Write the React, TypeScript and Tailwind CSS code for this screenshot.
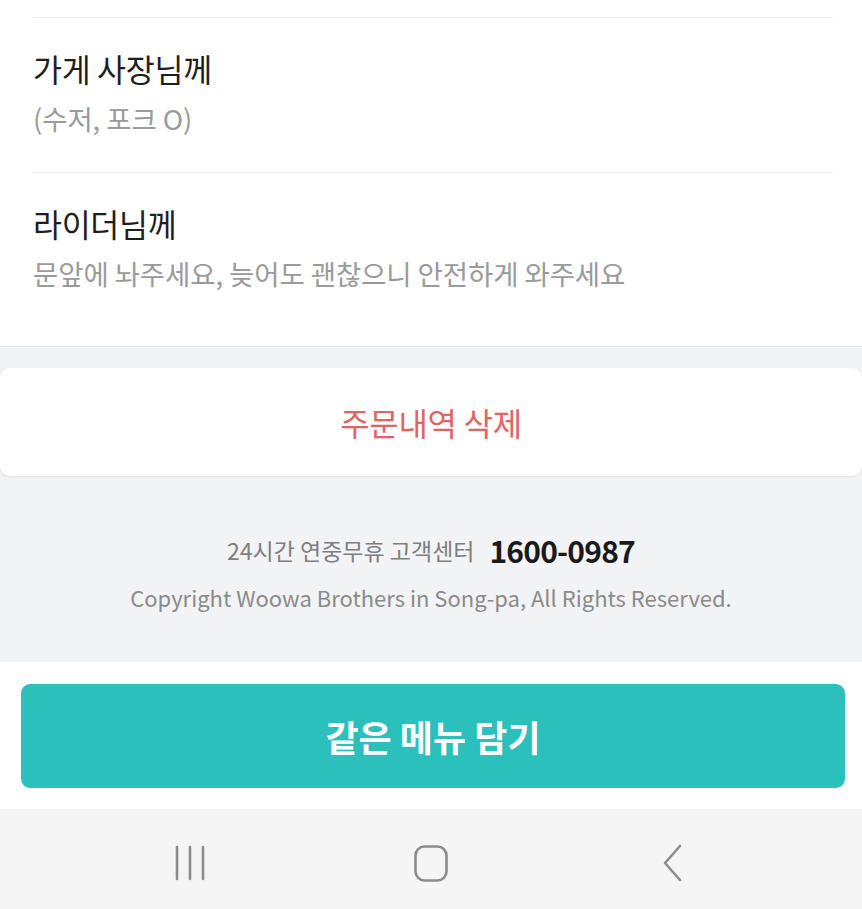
import React from 'react';

const KR = { fontFamily: '"Noto Sans CJK KR", "Noto Sans", sans-serif' };

function RequestItem({ title, note }: { title: string; note: string }) {
  return (
    <div className="border-t border-[#eeeff1] pt-[30px] pb-[36px]">
      <p className="text-[31.5px] leading-[40px] text-[#1e1e1e] tracking-[-0.3px]">{title}</p>
      <p className="mt-[12px] text-[27.5px] leading-[36px] text-[#9a9a9a] tracking-[-0.1px]">{note}</p>
    </div>
  );
}

function NavBar() {
  return (
    <div className="h-[100px] bg-[#f5f5f5] flex items-center justify-center gap-[201px] pt-[8px]">
      {/* recent apps */}
      <div className="w-[40px] flex justify-center">
        <svg width="32" height="36" viewBox="0 0 32 36" fill="none" stroke="#8c8c8c" strokeWidth="2.6" strokeLinecap="round">
          <path d="M3 2v32M16 2v32M29 2v32" />
        </svg>
      </div>
      {/* home */}
      <div className="w-[40px] flex justify-center">
        <svg width="34" height="37" viewBox="0 0 34 37" fill="none" stroke="#8c8c8c" strokeWidth="2.6">
          <rect x="1.5" y="1.5" width="31" height="34" rx="9" />
        </svg>
      </div>
      {/* back */}
      <div className="w-[40px] flex justify-center">
        <svg width="20" height="38" viewBox="0 0 20 38" fill="none" stroke="#8c8c8c" strokeWidth="2.6" strokeLinecap="round" strokeLinejoin="round">
          <path d="M18 2L3 19l15 17" />
        </svg>
      </div>
    </div>
  );
}

export default function App() {
  return (
    <div className="w-[862px] h-[909px] overflow-hidden bg-[#f2f3f5] flex flex-col" style={KR}>
      {/* request notes */}
      <div className="bg-white pt-[17px] pb-[19px] border-b border-[#e4e5e7]">
        <div className="ml-[32px] mr-[28px] pl-[1px]">
          <RequestItem title="가게 사장님께" note="(수저, 포크 O)" />
          <RequestItem title="라이더님께" note="문앞에 놔주세요, 늦어도 괜찮으니 안전하게 와주세요" />
        </div>
      </div>

      {/* delete + footer */}
      <div className="pt-[21px] pb-[50px]">
        <button className="w-full h-[108px] bg-white rounded-[10px] shadow-[0_1px_2px_rgba(0,0,0,0.08)] flex items-center justify-center">
          <span className="text-[32px] text-[#e06464] tracking-[-0.3px]">주문내역 삭제</span>
        </button>
        <div className="mt-[54px] flex items-center justify-center gap-[15px] h-[40px]">
          <span className="text-[23px] text-[#7e7e7e]">24시간 연중무휴 고객센터</span>
          <span className="text-[30px] font-bold text-[#1a1a1a] tracking-[-0.8px]">1600-0987</span>
        </div>
        <p className="mt-[12px] text-center text-[22px] leading-[30px] text-[#8a8a8a]">
          Copyright Woowa Brothers in Song-pa, All Rights Reserved.
        </p>
      </div>

      {/* CTA */}
      <div className="bg-white pl-[21px] pr-[17px] pt-[22px] pb-[21px]">
        <button className="w-full h-[104px] rounded-[9px] bg-[#2bc0bb] flex items-center justify-center">
          <span className="text-[36px] font-bold text-white">같은 메뉴 담기</span>
        </button>
      </div>

      <NavBar />
    </div>
  );
}
